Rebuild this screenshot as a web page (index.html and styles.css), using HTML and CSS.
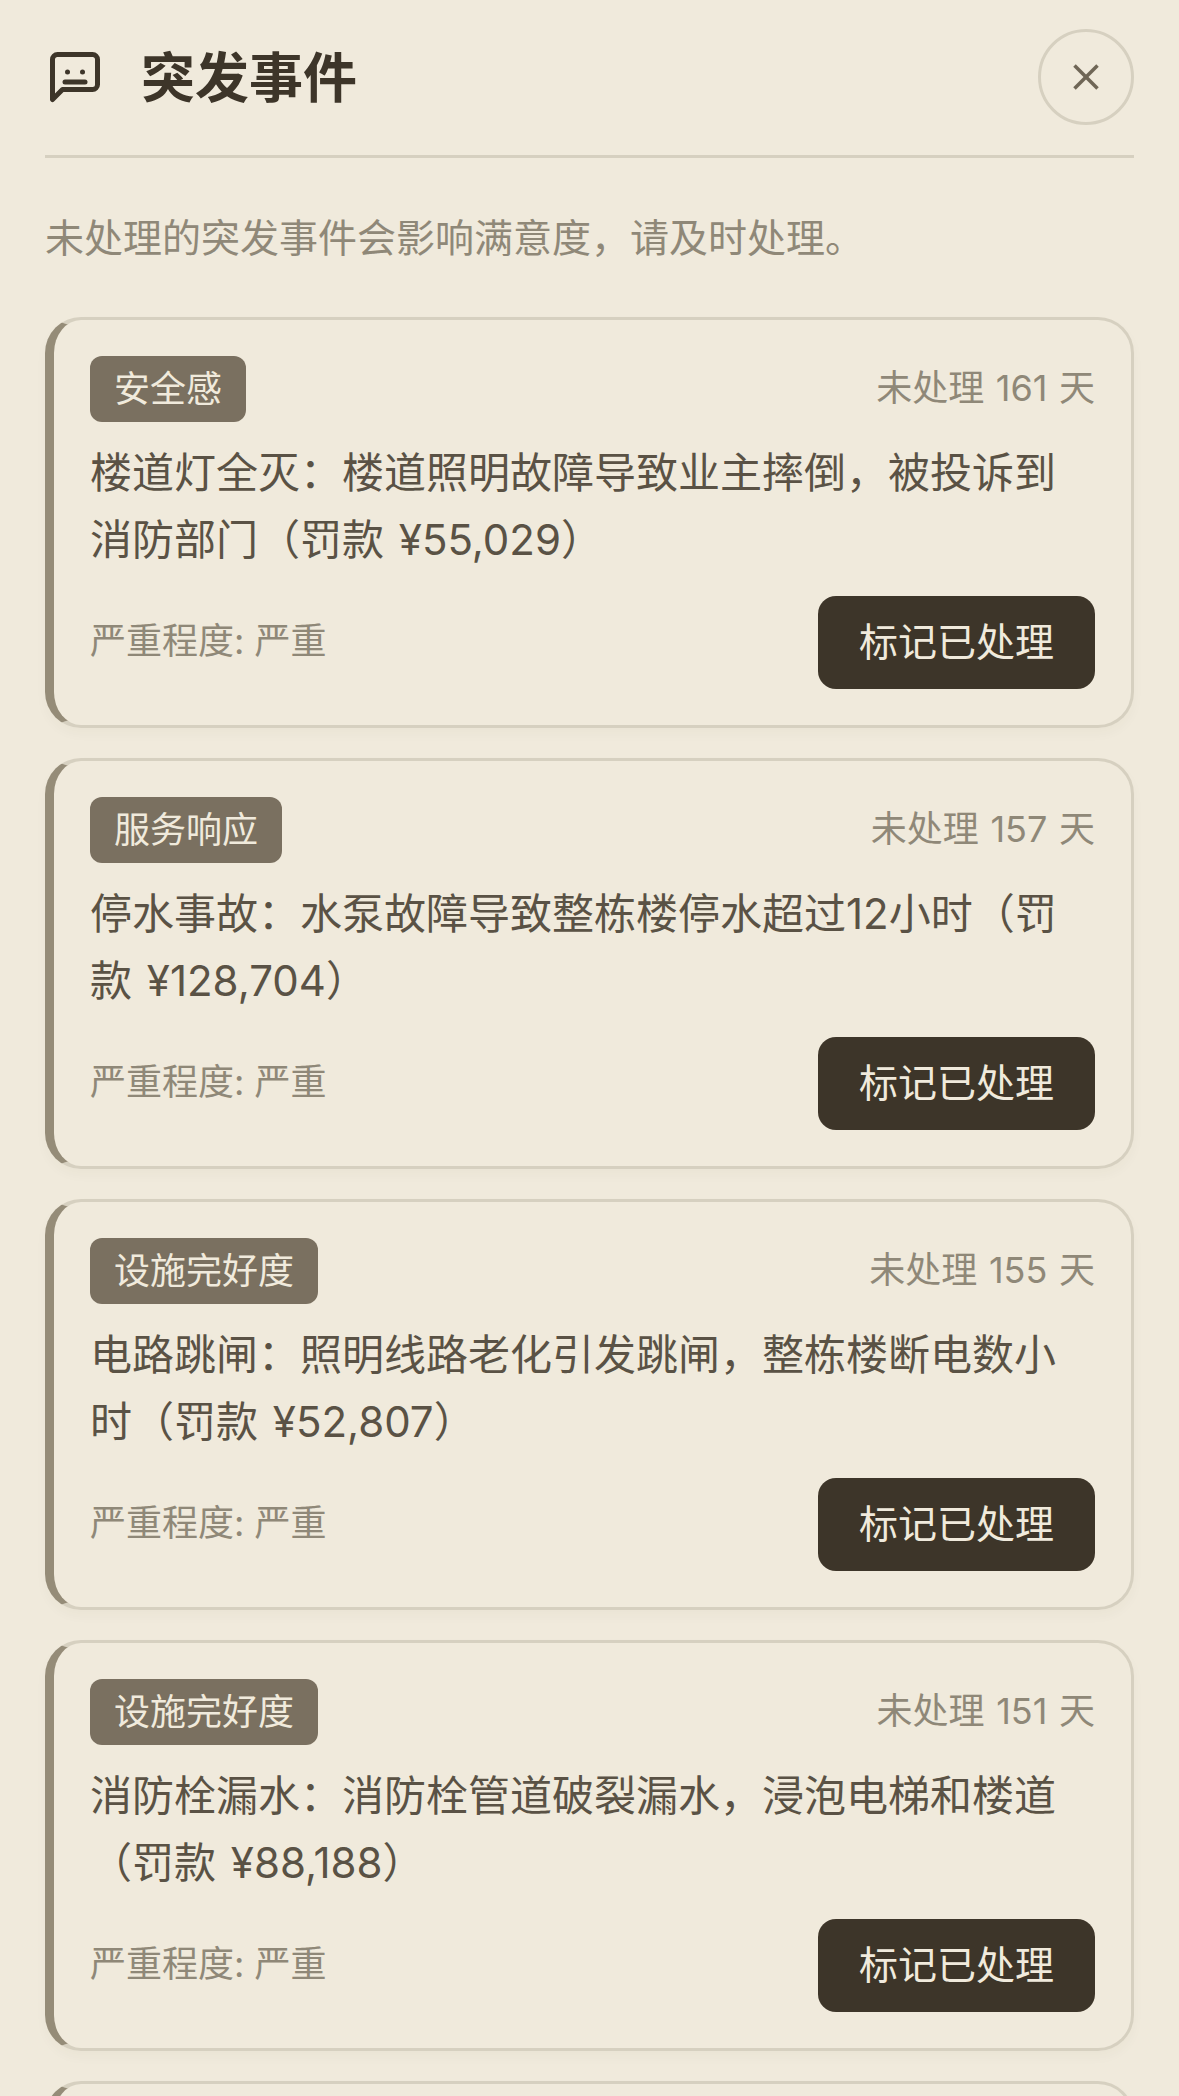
FILE: index.html
```html
<!DOCTYPE html>
<html lang="zh-CN">
<head>
    <meta charset="UTF-8">
    <meta name="viewport" content="width=device-width, initial-scale=1.0">
    <title>突发事件</title>
    <link rel="stylesheet" href="styles.css">
</head>
<body>
    <div class="panel">
        <div class="panel-header">
            <div class="panel-title">
                <svg class="title-icon" viewBox="0 0 24 24" fill="none" stroke="currentColor" stroke-width="2" stroke-linecap="round" stroke-linejoin="round">
                    <path d="M21 15a2 2 0 0 1-2 2H7l-4 4V5a2 2 0 0 1 2-2h14a2 2 0 0 1 2 2z"/>
                    <path d="M8 14h8"/>
                    <circle class="eye" cx="9" cy="10" r="1"/>
                    <circle class="eye" cx="15" cy="10" r="1"/>
                </svg>
                <h1>突发事件</h1>
            </div>
            <button class="close-btn" type="button" aria-label="关闭">
                <svg viewBox="0 0 24 24" fill="none" stroke="currentColor" stroke-width="1.8">
                    <path d="M18 6 6 18"/>
                    <path d="m6 6 12 12"/>
                </svg>
            </button>
        </div>

        <p class="hint">未处理的突发事件会影响满意度，请及时处理。</p>

        <div class="card-list">
            <div class="card">
                <div class="card-top">
                    <span class="tag">安全感</span>
                    <span class="days">未处理 161 天</span>
                </div>
                <p class="desc">楼道灯全灭：楼道照明故障导致业主摔倒，被投诉到消防部门（罚款 ¥55,029）</p>
                <div class="card-bottom">
                    <span class="severity">严重程度: 严重</span>
                    <button class="resolve-btn" type="button">标记已处理</button>
                </div>
            </div>

            <div class="card">
                <div class="card-top">
                    <span class="tag">服务响应</span>
                    <span class="days">未处理 157 天</span>
                </div>
                <p class="desc">停水事故：水泵故障导致整栋楼停水超过12小时（罚款 ¥128,704）</p>
                <div class="card-bottom">
                    <span class="severity">严重程度: 严重</span>
                    <button class="resolve-btn" type="button">标记已处理</button>
                </div>
            </div>

            <div class="card">
                <div class="card-top">
                    <span class="tag">设施完好度</span>
                    <span class="days">未处理 155 天</span>
                </div>
                <p class="desc">电路跳闸：照明线路老化引发跳闸，整栋楼断电数小时（罚款 ¥52,807）</p>
                <div class="card-bottom">
                    <span class="severity">严重程度: 严重</span>
                    <button class="resolve-btn" type="button">标记已处理</button>
                </div>
            </div>

            <div class="card">
                <div class="card-top">
                    <span class="tag">设施完好度</span>
                    <span class="days">未处理 151 天</span>
                </div>
                <p class="desc">消防栓漏水：消防栓管道破裂漏水，浸泡电梯和楼道（罚款 ¥88,188）</p>
                <div class="card-bottom">
                    <span class="severity">严重程度: 严重</span>
                    <button class="resolve-btn" type="button">标记已处理</button>
                </div>
            </div>

            <!-- only the top edge of the next card is in view -->
            <div class="card card-cut"></div>
        </div>
    </div>
</body>
</html>
```

FILE: styles.css
```css
* {
    box-sizing: border-box;
}

html, body {
    height: 100%;
}

body {
    margin: 0;
    background-color: #f0eadc;
    font-family: Inter, "Noto Sans CJK SC", sans-serif;
    overflow: hidden;
}

.panel {
    height: 2096px;
    padding: 29px 45px 0;
    overflow: hidden;
}

.panel-header {
    display: flex;
    justify-content: space-between;
    align-items: center;
    padding-bottom: 30px;
    border-bottom: 3px solid #d6d0c0;
}

.panel-title {
    display: flex;
    align-items: center;
    gap: 36px;
    color: #3d3529;
}

.title-icon {
    width: 60px;
    height: 60px;
}

.eye {
    fill: currentColor;
    stroke: none;
}

h1 {
    margin: 0;
    padding-top: 4px;
    font-size: 54px;
    font-weight: 700;
    line-height: 1.3;
}

.close-btn {
    display: flex;
    justify-content: center;
    align-items: center;
    width: 96px;
    height: 96px;
    padding: 0;
    background: none;
    border: 3px solid #d6d0c0;
    border-radius: 50%;
    color: #6f6656;
}

.close-btn svg {
    width: 46px;
    height: 46px;
}

.hint {
    margin: 51px 0 50px;
    font-size: 39px;
    line-height: 58px;
    color: #8f8878;
}

.card-list {
    display: flex;
    flex-direction: column;
    gap: 30px;
}

.card {
    padding: 36px;
    border: 3px solid #d6d0c0;
    border-left: 9px solid #958c78;
    border-radius: 36px;
    box-shadow: 0 6px 12px rgba(61, 53, 41, 0.03);
}

.card-cut {
    flex-shrink: 0;
    height: 411px;
}

.card-top {
    display: flex;
    justify-content: space-between;
    align-items: center;
}

.tag {
    height: 66px;
    padding: 0 24px;
    background-color: #7a7060;
    border-radius: 12px;
    font-size: 36px;
    line-height: 66px;
    color: #f0eadc;
}

.days {
    padding-bottom: 2px;
    font-size: 36px;
    line-height: 62px;
    word-spacing: 1.5px;
    color: #8f8878;
}

.desc {
    margin: 17px 0 23px;
    font-size: 42px;
    line-height: 67px;
    word-spacing: 3px;
    color: #5a5245;
}

.card-bottom {
    display: flex;
    justify-content: space-between;
    align-items: center;
}

.severity {
    padding-bottom: 4px;
    font-size: 36px;
    line-height: 60px;
    color: #8f8878;
}

.resolve-btn {
    width: 277px;
    height: 93px;
    padding: 0 0 2px;
    background-color: #3d3529;
    border: none;
    border-radius: 18px;
    font-family: inherit;
    font-size: 39px;
    line-height: 91px;
    color: #f0eadc;
}
```
